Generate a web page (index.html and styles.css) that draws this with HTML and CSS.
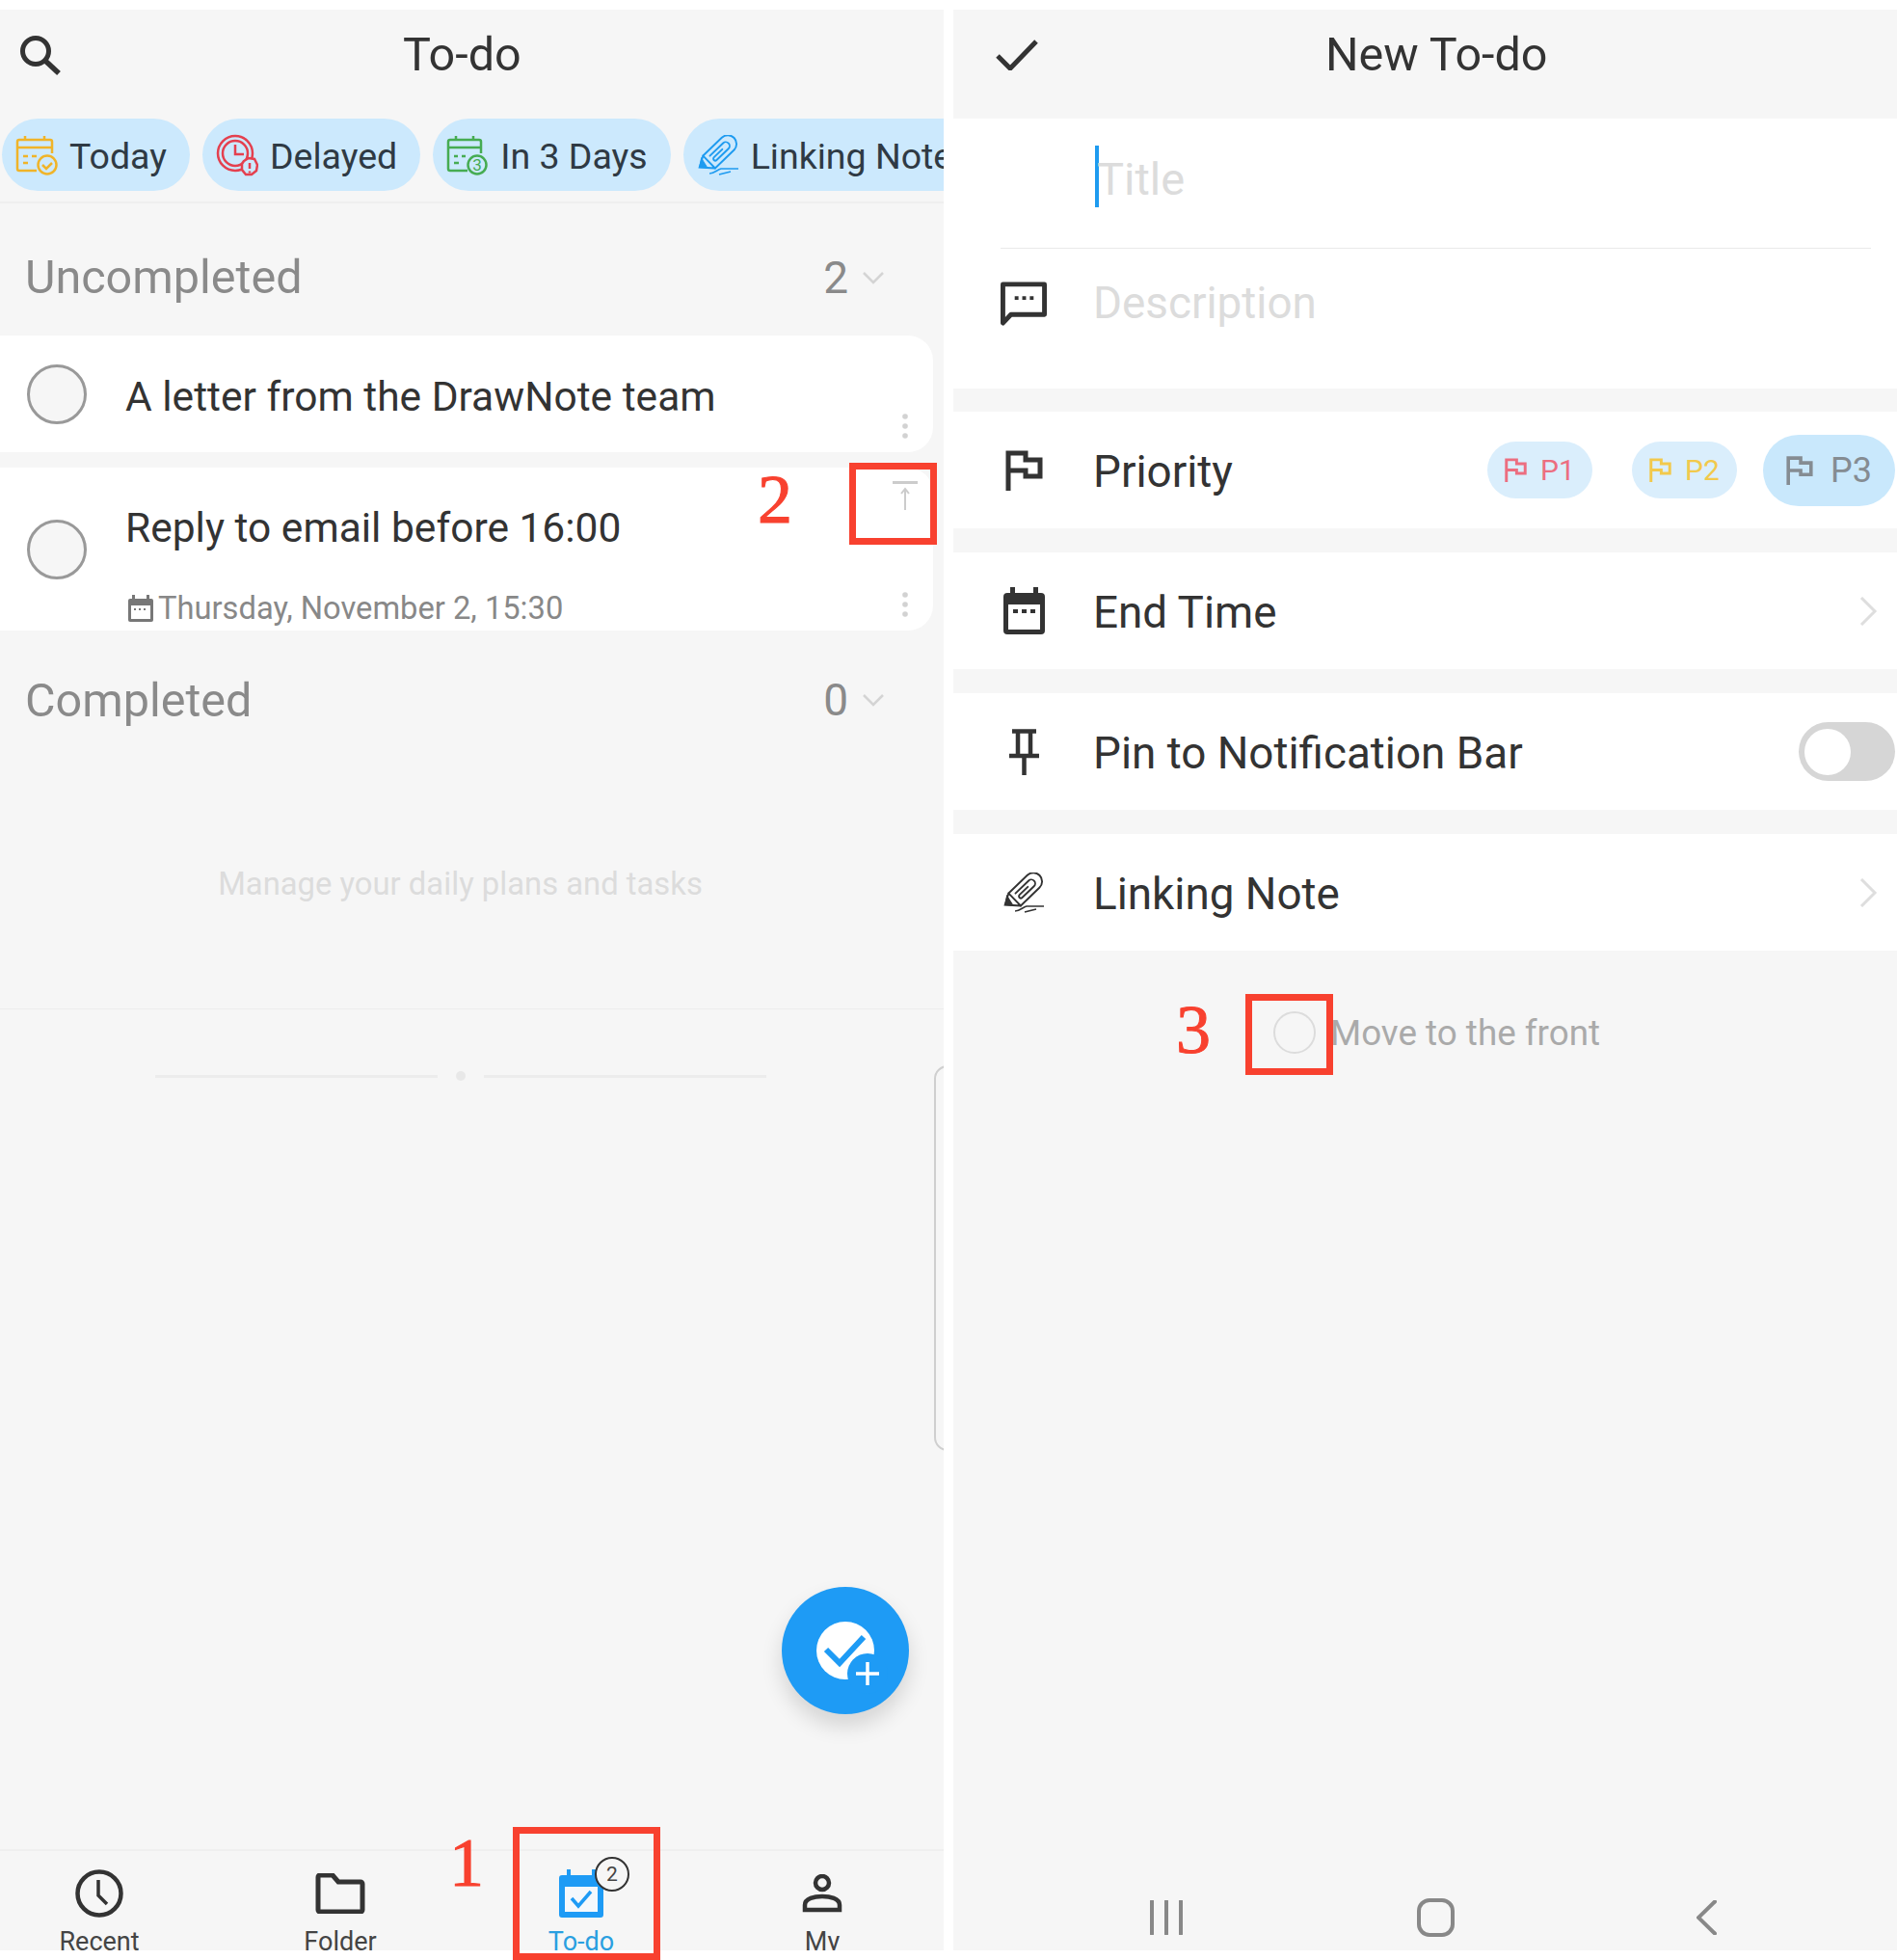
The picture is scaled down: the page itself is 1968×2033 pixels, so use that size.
FILE: index.html
```html
<!DOCTYPE html>
<html lang="en">
<head>
<meta charset="utf-8">
<title>To-do</title>
<link rel="stylesheet" href="styles.css">
</head>
<body>
<svg class="defs" width="0" height="0" aria-hidden="true">
  <symbol id="clip" viewBox="0 0 44 42">
    <g transform="translate(22 19) rotate(46)" fill="none" stroke="currentColor" stroke-width="1.900" stroke-linecap="round">
      <path d="M-9 13V-14a9 9 0 0 1 18 0V13"/>
      <path d="M-4 8V-11a4 4 0 0 1 8 0V6a2 2 0 0 1-4 0V-6"/>
      <path d="M-9 13L9 13M-9 13L-3 24 9 13"/>
      <path d="M-8.500 16L-3 24 3 18.500z" fill="currentColor" stroke-width="1"/>
    </g>
    <path d="M13 40c5 0 8-4 12-5h18M23 41l12-3" fill="none" stroke="currentColor" stroke-width="1.600"/>
  </symbol>
  <symbol id="chev" viewBox="0 0 20 30">
    <path d="M3 1l14 14L3 29" fill="none" stroke="currentColor" stroke-width="3"/>
  </symbol>
  <symbol id="down" viewBox="0 0 24 14">
    <path d="M2 2l10 10L22 2" fill="none" stroke="currentColor" stroke-width="2.500"/>
  </symbol>
  <symbol id="flag" viewBox="0 0 39 42">
    <path d="M3 42V3h18v7h15v17H21v-6H3" fill="none" stroke="currentColor" stroke-width="5"/>
  </symbol>
  <symbol id="dots" viewBox="0 0 6 26">
    <circle cx="3" cy="3" r="2.800" fill="currentColor"/>
    <circle cx="3" cy="13" r="2.800" fill="currentColor"/>
    <circle cx="3" cy="23" r="2.800" fill="currentColor"/>
  </symbol>
</svg>

<div class="page">
  <section class="panel">
    <header class="topbar topbar-left">
      <svg class="search" viewBox="0 0 43 42" width="43" height="42"><circle cx="17" cy="17" r="13.500" fill="none" stroke="#333" stroke-width="5"/><path d="M27 27l14 13" stroke="#333" stroke-width="5.500"/></svg>
      <h1 class="title">To-do</h1>
    </header>

    <div class="chips">
      <div class="chip">
        <svg class="chip-icon chip-orange" viewBox="0 0 44 42" width="44" height="42"><g fill="none" stroke="currentColor" stroke-width="2.500"><path d="M38 19V7a2 2 0 0 0-2-2H4a2 2 0 0 0-2 2v28a2 2 0 0 0 2 2h18M2 13h36M10 1v5M30 1v5M8 22h5M17 22h5M8 29h5"/><circle cx="33" cy="31" r="9.500"/><path d="M28 31l4 4 6-6"/></g></svg>
        <span class="chip-text">Today</span>
      </div>
      <div class="chip">
        <svg class="chip-icon chip-red" viewBox="0 0 44 44" width="44" height="44"><g fill="none" stroke="currentColor" stroke-width="2.500"><circle cx="20" cy="20" r="18"/><circle cx="20" cy="20" r="13"/><path d="M20 11v10h9"/><path d="M29 28l5-3 6 1 3 6-1 6-5 4h-6l-4-5v-6z" fill="#cce9fd"/><path d="M35 30v6M35 38.500v2"/></g></svg>
        <span class="chip-text">Delayed</span>
      </div>
      <div class="chip">
        <svg class="chip-icon chip-green" viewBox="0 0 44 42" width="44" height="42"><g fill="none" stroke="currentColor" stroke-width="2.500"><path d="M36 19V7a2 2 0 0 0-2-2H4a2 2 0 0 0-2 2v28a2 2 0 0 0 2 2h18M2 13h34M10 1v5M28 1v5M8 22h4M16 22h4M8 29h5"/><circle cx="32" cy="31" r="9.500"/></g><text x="32" y="37" class="chip-three">3</text></svg>
        <span class="chip-text">In 3 Days</span>
      </div>
      <div class="chip chip-last">
        <svg class="chip-icon chip-blue" width="44" height="42"><use href="#clip"/></svg>
        <span class="chip-text">Linking Note</span>
      </div>
    </div>

    <div class="group-head group-first">
      <span>Uncompleted</span>
      <span class="group-count">2 <svg class="down" width="24" height="14"><use href="#down"/></svg></span>
    </div>

    <article class="card card-one">
      <span class="ring"></span>
      <p class="card-title">A letter from the DrawNote team</p>
      <svg class="more" width="6" height="26"><use href="#dots"/></svg>
    </article>

    <article class="card card-two">
      <span class="ring"></span>
      <div class="card-body">
        <p class="card-title">Reply to email before 16:00</p>
        <p class="card-date">
          <svg width="26" height="28" viewBox="0 0 26 28"><rect x="0" y="4" width="26" height="24" rx="2" fill="#777"/><rect x="3" y="11" width="20" height="14" fill="#fff"/><rect x="4" y="0" width="3" height="6" fill="#777"/><rect x="19" y="0" width="3" height="6" fill="#777"/><path d="M6 15h2M11 15h2M16 15h2" stroke="#777" stroke-width="2"/></svg>
          <span>Thursday, November 2, 15:30</span>
        </p>
      </div>
      <svg class="pin-top" width="26" height="30" viewBox="0 0 26 30"><path d="M0 1.500h26" stroke="#ccc" stroke-width="3"/><path d="M13 30V10M9 13l4-5 4 5" fill="none" stroke="#ccc" stroke-width="2"/></svg>
      <svg class="more" width="6" height="26"><use href="#dots"/></svg>
    </article>

    <div class="group-head group-second">
      <span>Completed</span>
      <span class="group-count">0 <svg class="down" width="24" height="14"><use href="#down"/></svg></span>
    </div>

    <div class="empty">Manage your daily plans and tasks</div>

    <div class="ornament">
      <span class="ornament-line"></span>
      <span class="ornament-dot"></span>
      <span class="ornament-line"></span>
    </div>

    <div class="handle"></div>

    <button class="fab" type="button" aria-label="New to-do">
      <svg viewBox="0 0 100 100" width="100" height="100">
        <circle cx="50" cy="50" r="30" fill="#fff"/>
        <circle cx="73" cy="74" r="21" fill="#1e9bf5"/>
        <path d="M30 49l14 14 25-27" fill="none" stroke="#1e9bf5" stroke-width="6"/>
        <path d="M73 62v24M61 74h24" stroke="#fff" stroke-width="3.500"/>
      </svg>
    </button>

    <nav class="tabs">
      <div class="tab">
        <span class="tab-icon"><svg viewBox="0 0 50 50" width="50" height="50"><circle cx="25" cy="25" r="22.500" fill="none" stroke="#333" stroke-width="4.500"/><path d="M24 11v16l9 9" fill="none" stroke="#333" stroke-width="3.500"/></svg></span>
        <span class="tab-label">Recent</span>
      </div>
      <div class="tab">
        <span class="tab-icon"><svg viewBox="0 0 52 42" width="52" height="42"><path d="M3 4a2 2 0 0 1 2-2h13l6 7h23a2 2 0 0 1 2 2v27a2 2 0 0 1-2 2H5a2 2 0 0 1-2-2z" fill="none" stroke="#333" stroke-width="5"/></svg></span>
        <span class="tab-label">Folder</span>
      </div>
      <div class="tab tab-active">
        <span class="tab-icon"><svg viewBox="0 0 46 50" width="46" height="50"><path d="M8 0h4v6h22V0h4v6h5a3 3 0 0 1 3 3v38a3 3 0 0 1-3 3H3a3 3 0 0 1-3-3V9a3 3 0 0 1 3-3h5z" fill="#1e9bf5"/><rect x="6" y="18" width="34" height="26" fill="#f4f8fc"/><path d="M13 30l7 8 13-15" fill="none" stroke="#1e9bf5" stroke-width="3.500"/></svg></span>
        <span class="tab-label">To-do</span>
        <span class="badge">2</span>
      </div>
      <div class="tab">
        <span class="tab-icon"><svg viewBox="0 0 42 40" width="42" height="40"><circle cx="21" cy="9" r="7" fill="none" stroke="#333" stroke-width="4.500"/><path d="M3 37v-5c0-7 10-9 18-9s18 2 18 9v5z" fill="none" stroke="#333" stroke-width="4.500"/></svg></span>
        <span class="tab-label">My</span>
      </div>
    </nav>
  </section>

  <section class="panel">
    <header class="topbar topbar-right">
      <svg viewBox="0 0 44 32" width="44" height="32"><path d="M2 17l13 13L42 2" fill="none" stroke="#333" stroke-width="5"/></svg>
      <h1 class="title">New To-do</h1>
    </header>

    <div class="form-block">
      <div class="title-field">
        <span class="caret"></span>
        <span class="placeholder">Title</span>
      </div>
      <div class="desc-field">
        <span class="slot"><svg viewBox="0 0 49 46" width="49" height="46"><path d="M2.500 2.500h44v32H11l-8.500 9z" fill="none" stroke="#333" stroke-width="5" stroke-linejoin="round"/><path d="M15 17h4M23 17h4M31 17h4" stroke="#333" stroke-width="4"/></svg></span>
        <span class="placeholder">Description</span>
      </div>
    </div>

    <div class="row row-priority">
      <span class="slot"><svg class="ink" width="39" height="42"><use href="#flag"/></svg></span>
      <span class="row-label">Priority</span>
      <div class="priorities">
        <span class="prio prio-red"><svg width="23" height="25"><use href="#flag"/></svg>P1</span>
        <span class="prio prio-yellow"><svg width="23" height="25"><use href="#flag"/></svg>P2</span>
        <span class="prio prio-grey"><svg width="28" height="30"><use href="#flag"/></svg>P3</span>
      </div>
    </div>

    <div class="row">
      <span class="slot"><svg viewBox="0 0 43 49" width="43" height="49"><rect y="6" width="43" height="43" rx="4" fill="#333"/><rect x="5" y="18" width="33" height="26" fill="#fff"/><rect x="7" width="5" height="10" fill="#333"/><rect x="31" width="5" height="10" fill="#333"/><path d="M10 25h5M19 25h5M28 25h5" stroke="#333" stroke-width="4"/></svg></span>
      <span class="row-label">End Time</span>
      <svg class="row-chev" width="20" height="30"><use href="#chev"/></svg>
    </div>

    <div class="row row-wide">
      <span class="slot"><svg viewBox="0 0 33 48" width="33" height="48"><path d="M4 2.500h25M10 3v24M23 3v24M1 28h31M16.500 28v20" fill="none" stroke="#333" stroke-width="4.500"/></svg></span>
      <span class="row-label">Pin to Notification Bar</span>
      <span class="toggle"><span class="knob"></span></span>
    </div>

    <div class="row row-wide">
      <span class="slot"><svg class="ink" width="44" height="42"><use href="#clip"/></svg></span>
      <span class="row-label">Linking Note</span>
      <svg class="row-chev" width="20" height="30"><use href="#chev"/></svg>
    </div>

    <div class="front">
      <span class="front-ring"></span>
      <span class="front-text">Move to the front</span>
    </div>

    <div class="sysnav">
      <svg class="sys-menu" viewBox="0 0 35 36" width="35" height="36"><path d="M2 1v34M17 1v34M32 1v34" stroke="#888" stroke-width="4" stroke-linecap="round"/></svg>
      <svg class="sys-home" viewBox="0 0 39 40" width="39" height="40"><rect x="2" y="2" width="35" height="36" rx="11" fill="none" stroke="#888" stroke-width="4"/></svg>
      <svg class="sys-back" viewBox="0 0 21 36" width="21" height="36"><path d="M19 1.500L2 18l17 16.500" fill="none" stroke="#888" stroke-width="4" stroke-linecap="round"/></svg>
    </div>
  </section>
</div>

<span class="mark mark-one"></span>
<span class="mark mark-two"></span>
<span class="mark mark-three"></span>
<span class="num num-one">1</span>
<span class="num num-two">2</span>
<span class="num num-three">3</span>
</body>
</html>
```

FILE: styles.css
```css
* { box-sizing: border-box; }

html, body {
  margin: 0;
  padding: 0;
  background: #fff;
}

body {
  position: relative;
  width: 1968px;
  height: 2033px;
  overflow: hidden;
  font-family: Roboto, "Liberation Sans", sans-serif;
  color: #333;
}

.defs { position: absolute; }

.page {
  display: flex;
  gap: 10px;
  height: 2023px;
  padding-top: 10px;
}

.panel {
  position: relative;
  display: flex;
  flex-direction: column;
  width: 979px;
  background: #f6f6f6;
  overflow: hidden;
}

.topbar {
  display: flex;
  align-items: center;
  flex: none;
  height: 113px;
  padding-bottom: 20px;
}

.title {
  margin: 0;
  font-size: 48.500px;
  font-weight: 400;
  line-height: 60px;
}

.topbar-left { padding-left: 20px; }
.topbar-left .title { margin-left: 355px; }
.topbar-right { padding-left: 44px; }
.topbar-right .title { margin-left: 298px; }

/* chips */
.chips {
  display: flex;
  flex: none;
  gap: 13px;
  height: 88px;
  padding-left: 2px;
  border-bottom: 2px solid #efefef;
}

.chip {
  display: flex;
  align-items: center;
  flex: none;
  gap: 12px;
  height: 75px;
  padding: 0 24px 0 14px;
  border-radius: 38px;
  background: #cce9fd;
  font-size: 37.500px;
  color: #2f3a44;
}

.chip-text { padding-top: 3px; }
.chip-last { padding-right: 60px; }
.chip-orange { color: #f0b429; }
.chip-red { color: #e4404f; }
.chip-green { color: #46ac52; }
.chip-blue { color: #1e9bf0; }

.chip-three {
  font-size: 17px;
  text-anchor: middle;
  fill: #46ac52;
}

/* groups */
.group-head {
  display: flex;
  align-items: center;
  justify-content: space-between;
  flex: none;
  padding-right: 61px;
  padding-left: 26px;
  font-size: 48.500px;
  color: #8a8a8a;
}

.group-first { height: 137px; padding-top: 16px; }
.group-second { height: 142px; padding-top: 2px; }

.group-count {
  display: flex;
  align-items: center;
  gap: 14px;
  font-size: 46px;
}

.down { color: #d4d4d4; }

/* cards */
.card {
  position: relative;
  display: flex;
  align-items: center;
  flex: none;
  gap: 40px;
  width: 968px;
  padding-left: 28px;
  border-radius: 0 26px 26px 0;
  background: #fff;
}

.card-one { height: 121px; margin-bottom: 16px; }
.card-one .card-title { padding-top: 7px; }
.card-two { height: 169px; }

.ring {
  flex: none;
  width: 62px;
  height: 62px;
  border: 3.500px solid #999;
  border-radius: 50%;
  background: #f6f6f6;
}

.card-title {
  margin: 0;
  font-size: 42.500px;
  line-height: 50px;
  color: #333;
}

.card-body {
  display: flex;
  flex-direction: column;
  gap: 38px;
  padding-top: 35px;
}

.card-date {
  display: flex;
  align-items: center;
  gap: 5px;
  margin: 0;
  padding-left: 3px;
  font-size: 32.700px;
  line-height: 40px;
  color: #888;
}

.more {
  position: absolute;
  right: 26px;
  bottom: 14px;
  color: #d2d2d2;
}

.pin-top {
  position: absolute;
  top: 14px;
  right: 16px;
}

/* empty state */
.empty {
  flex: none;
  height: 251px;
  padding-top: 101px;
  padding-right: 24px;
  border-bottom: 1px solid #ececec;
  font-size: 32.800px;
  line-height: 40px;
  text-align: center;
  color: #dcdcdc;
}

.ornament {
  display: flex;
  align-items: center;
  flex: none;
  gap: 19px;
  height: 10px;
  margin-top: 64px;
  padding-left: 161px;
}

.ornament-line {
  width: 293px;
  height: 3px;
  background: #ececec;
}

.ornament-dot {
  width: 10px;
  height: 10px;
  border-radius: 50%;
  background: #e8e8e8;
}

.handle {
  position: absolute;
  top: 1095px;
  right: -6px;
  width: 16px;
  height: 400px;
  border: 2px solid #cfcfcf;
  border-radius: 14px 0 0 14px;
}

.fab {
  position: absolute;
  top: 1636px;
  left: 811px;
  display: flex;
  align-items: center;
  justify-content: center;
  width: 132px;
  height: 132px;
  padding: 0;
  border: 0;
  border-radius: 50%;
  background: #1e9bf5;
  box-shadow: 0 12px 22px rgba(0, 0, 0, .14);
}

/* tabs */
.tabs {
  display: flex;
  flex: none;
  gap: 90px;
  height: 105px;
  margin-top: auto;
  padding-left: 23px;
  border-top: 2px solid #efefef;
  overflow: hidden;
}

.tab {
  position: relative;
  display: flex;
  flex-direction: column;
  align-items: center;
  width: 160px;
  padding-top: 18px;
  font-size: 27px;
  color: #444;
}

.tab-icon {
  display: flex;
  align-items: center;
  justify-content: center;
  flex: none;
  height: 52px;
}

.tab-label {
  margin-top: 11px;
  line-height: 26px;
}

.tab-active { color: #2a9fe0; }

.badge {
  position: absolute;
  top: 6px;
  left: 94px;
  width: 36px;
  height: 36px;
  border: 2px solid #333;
  border-radius: 50%;
  background: #f6f6f6;
  font-size: 21px;
  line-height: 32px;
  text-align: center;
  color: #444;
}

/* form */
.form-block {
  flex: none;
  height: 280px;
  background: #fff;
}

.title-field {
  display: flex;
  align-items: center;
  height: 135px;
  margin-right: 27px;
  margin-left: 49px;
  padding-left: 98px;
  border-bottom: 1px solid #e9e9e9;
  font-size: 47px;
}

.caret {
  flex: none;
  width: 4px;
  height: 64px;
  margin-top: -14px;
  background: #1e9bf0;
}

.title-field .placeholder { margin-top: -10px; margin-left: -2px; }

.placeholder { color: #dcdcdc; }

.desc-field {
  display: flex;
  align-items: center;
  height: 113px;
  padding-left: 49px;
  font-size: 45.800px;
}

.slot {
  display: flex;
  justify-content: center;
  flex: none;
  width: 48px;
  margin-right: 48px;
}

.ink { color: #333; }

.row {
  display: flex;
  align-items: center;
  flex: none;
  height: 121px;
  margin-top: 24px;
  padding-left: 49px;
  background: #fff;
  font-size: 45.800px;
}

.row-wide { margin-top: 25px; }
.row-priority { margin-top: 24px; }
.row-priority + .row { margin-top: 25px; }

.row-label { padding-top: 3px; color: #333; }

.row-chev {
  margin-left: auto;
  margin-right: 20px;
  color: #dedede;
}

.priorities {
  display: flex;
  align-items: center;
  margin-left: auto;
  margin-right: 2px;
}

.prio {
  display: flex;
  align-items: center;
  justify-content: center;
  gap: 14px;
  width: 109px;
  height: 59px;
  margin-right: 41px;
  border-radius: 30px;
  background: #daeefc;
  font-size: 30px;
}

.prio-red { color: #ec6e80; }
.prio-yellow { margin-right: 27px; color: #f2c94c; }

.prio-grey {
  gap: 18px;
  width: 137px;
  height: 74px;
  margin-right: 0;
  border-radius: 37px;
  background: #c9e8fc;
  font-size: 36px;
  color: #858c92;
}

.toggle {
  display: flex;
  align-items: center;
  width: 100px;
  height: 61px;
  margin-left: auto;
  margin-right: 2px;
  padding-left: 6px;
  border-radius: 31px;
  background: #d6d6d6;
}

.knob {
  width: 48px;
  height: 48px;
  border-radius: 50%;
  background: #fff;
}

.front {
  display: flex;
  align-items: center;
  flex: none;
  gap: 15px;
  padding-top: 61px;
  padding-left: 332px;
  font-size: 36.800px;
  line-height: 44px;
  color: #aaa;
}

.front-text { padding-top: 3px; }

.front-ring {
  width: 44px;
  height: 44px;
  border: 2px solid #dcdcdc;
  border-radius: 50%;
}

.sysnav {
  display: flex;
  align-items: center;
  flex: none;
  margin-top: auto;
  padding-bottom: 14px;
  padding-left: 204px;
}

.sys-home { margin-left: 242px; }
.sys-back { margin-left: 251px; }

/* annotations over the screenshot */
.mark {
  position: absolute;
  border: 7px solid #f8412f;
}

.mark-one { left: 532px; top: 1895px; width: 153px; height: 138px; }
.mark-two { left: 881px; top: 480px; width: 91px; height: 85px; }
.mark-three { left: 1292px; top: 1031px; width: 91px; height: 84px; }

.num {
  position: absolute;
  font-family: "Liberation Serif", serif;
  font-size: 72px;
  line-height: 72px;
  color: #f8412f;
  -webkit-text-stroke: 1px #f8412f;
}

.num-one { left: 466px; top: 1896px; }
.num-two { left: 786px; top: 482px; }
.num-three { left: 1220px; top: 1032px; }
```
